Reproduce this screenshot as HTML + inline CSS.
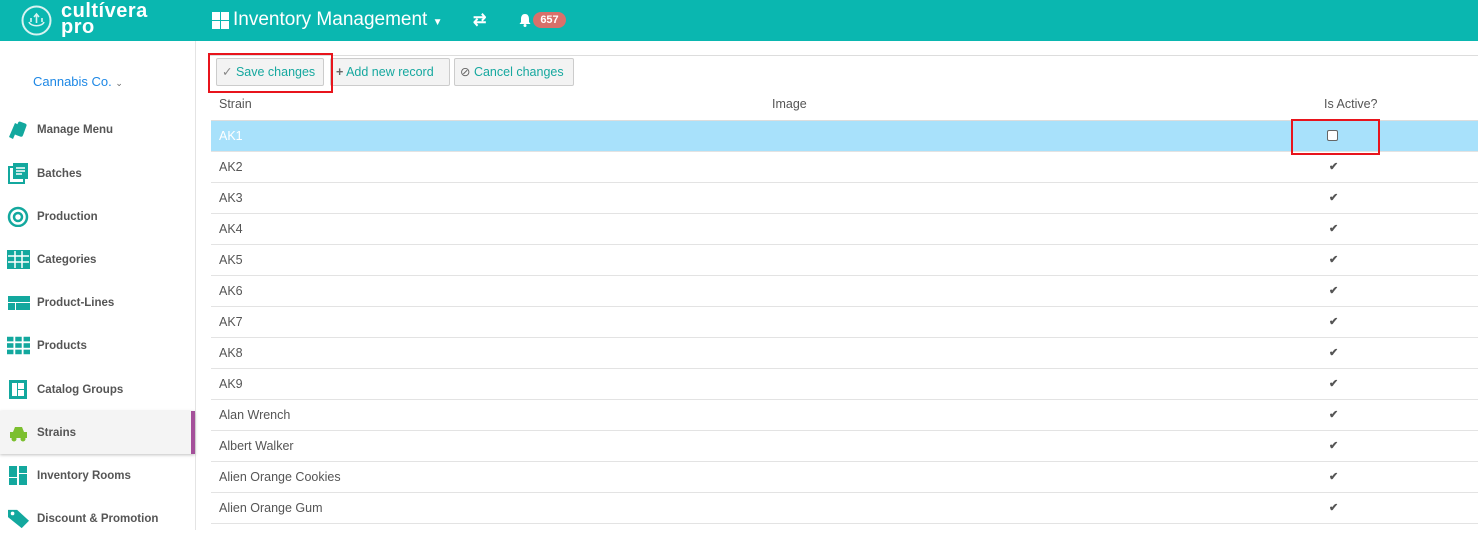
<!DOCTYPE html>
<html><head><meta charset="utf-8"><style>
*{margin:0;padding:0;box-sizing:border-box}
body{width:1478px;height:530px;overflow:hidden;font-family:"Liberation Sans",sans-serif;background:#fff;position:relative;font-size:13px;color:#444}
.top{position:absolute;left:0;top:0;width:1478px;height:41px;background:#0ab7b0;color:#fff}
.side{position:absolute;left:0;top:41px;width:196px;height:489px;background:#fff;border-right:1px solid #e4e4e4}
.item{position:absolute;left:0;width:195px;height:43px;display:flex;align-items:center;font-size:11.5px;font-weight:bold;color:#555}
.item .ic{position:absolute;left:7px;width:23px;height:21px}
.item span{position:absolute;left:37px}
.btn{position:absolute;top:58px;height:28px;border:1px solid #ccc;border-radius:2px;background:#f3f3f3;color:#16a89f;font-size:12.5px;line-height:26px;padding:0 5px;white-space:nowrap}
.row{position:absolute;left:211px;width:1267px;height:31px;border-bottom:1px solid #e3e3e3;font-size:12.5px;color:#555;line-height:30px}
.row span{position:absolute;left:8px}
.row b{position:absolute;left:1118px;top:0;font-size:11px;color:#555}
</style></head><body>
<div class="top">
 <svg style="position:absolute;left:21px;top:5px" width="31" height="31" viewBox="0 0 31 31"><circle cx="15.5" cy="15.5" r="14" fill="none" stroke="#d8f3f1" stroke-width="2"/><path d="M8 17c2 5 13 5 15 0M10 13v4M15.5 9v9M21 13v4M13 12l2.5-3 2.5 3" stroke="#d8f3f1" stroke-width="1.6" fill="none"/></svg>
 <div style="position:absolute;left:61px;top:3px;font-size:20px;font-weight:bold;line-height:16px;letter-spacing:0.5px">cultívera<br>pro</div>
 <div style="position:absolute;left:212px;top:12px;width:17px;height:17px;display:grid;grid-template-columns:8px 8px;gap:1px"><i style="background:#fff"></i><i style="background:#fff"></i><i style="background:#fff"></i><i style="background:#fff"></i></div>
 <div style="position:absolute;left:233px;top:9px;font-size:19px">Inventory Management <span style="font-size:10px">▼</span></div>
 <div style="position:absolute;left:473px;top:10px;font-size:16px;font-weight:bold">⇄</div>
 <svg style="position:absolute;left:519px;top:13px" width="12" height="14" viewBox="0 0 12 14"><path d="M6 1c-3 0-4 2.5-4 5v3L0.5 11h11L10 9V6c0-2.5-1-5-4-5z" fill="#fff"/><circle cx="6" cy="12.5" r="1.5" fill="#fff"/></svg>
 <div style="position:absolute;left:533px;top:12px;width:33px;height:16px;border-radius:8px;background:#d9706a;font-size:11px;font-weight:bold;text-align:center;line-height:16px">657</div>
</div>
<div class="side">
 <div style="position:absolute;left:33px;top:33px;color:#1e88e5;font-size:13px">Cannabis Co. <span style="font-size:9px;color:#666">⌄</span></div>
 <div class="item" style="top:67px"><svg class="ic" viewBox="0 0 23 21"><path d="M2 18l6-14 4 2-6 14z" fill="#13a89e"/><rect x="9" y="3" width="9" height="14" rx="2" transform="rotate(20 13 10)" fill="#13a89e"/></svg><span>Manage Menu</span></div>
 <div class="item" style="top:111px"><svg class="ic" viewBox="0 0 23 21"><rect x="2" y="4" width="15" height="16" fill="none" stroke="#13a89e" stroke-width="2"/><rect x="6" y="0" width="15" height="16" fill="#13a89e"/><path d="M9 5h9M9 8h9M9 11h6" stroke="#fff" stroke-width="1.5"/></svg><span>Batches</span></div>
 <div class="item" style="top:154px"><svg class="ic" viewBox="0 0 23 21"><circle cx="11" cy="11" r="9" fill="none" stroke="#13a89e" stroke-width="2.5"/><circle cx="11" cy="11" r="4" fill="none" stroke="#13a89e" stroke-width="2.5"/></svg><span>Production</span></div>
 <div class="item" style="top:197px"><svg class="ic" viewBox="0 0 23 21"><rect x="0" y="1" width="23" height="19" fill="#13a89e"/><path d="M1 7h21M1 13h21M8 2v17M15 2v17" stroke="#fff" stroke-width="1.5"/></svg><span>Categories</span></div>
 <div class="item" style="top:240px"><svg class="ic" viewBox="0 0 23 21"><rect x="1" y="4" width="22" height="6" fill="#13a89e"/><rect x="1" y="11" width="7" height="7" fill="#13a89e"/><rect x="9" y="11" width="14" height="7" fill="#13a89e"/></svg><span>Product-Lines</span></div>
 <div class="item" style="top:283px"><svg class="ic" viewBox="0 0 25 21"><g fill="#13a89e"><rect x="0" y="1" width="7" height="5"/><rect x="9" y="1" width="7" height="5"/><rect x="18" y="1" width="7" height="5"/><rect x="0" y="8" width="7" height="5"/><rect x="9" y="8" width="7" height="5"/><rect x="18" y="8" width="7" height="5"/><rect x="0" y="15" width="7" height="5"/><rect x="9" y="15" width="7" height="5"/><rect x="18" y="15" width="7" height="5"/></g></svg><span>Products</span></div>
 <div class="item" style="top:327px"><svg class="ic" viewBox="0 0 23 21"><rect x="2" y="1" width="18" height="19" fill="#13a89e"/><rect x="5" y="4" width="5" height="13" fill="#fff"/><rect x="11" y="4" width="6" height="6" fill="#fff"/><rect x="11" y="11" width="6" height="6" fill="#fff"/></svg><span>Catalog Groups</span></div>
 <div class="item" style="top:370px;background:#f4f4f4;box-shadow:0 1px 3px rgba(0,0,0,.25);border-right:4px solid #a4509a"><svg class="ic" viewBox="0 0 23 21"><path d="M3 10h17v6H3z M6 10l2-5h7l2 5" fill="#7cbf2f"/><circle cx="7" cy="17" r="2.5" fill="#7cbf2f"/><circle cx="16" cy="17" r="2.5" fill="#7cbf2f"/></svg><span>Strains</span></div>
 <div class="item" style="top:413px"><svg class="ic" viewBox="0 0 23 21"><g fill="#13a89e"><rect x="2" y="1" width="8" height="11"/><rect x="12" y="1" width="8" height="7"/><rect x="2" y="13" width="8" height="7"/><rect x="12" y="9" width="8" height="11"/></g></svg><span>Inventory Rooms</span></div>
 <div class="item" style="top:456px"><svg class="ic" viewBox="0 0 25 23"><path d="M1 2h10l13 12-8 8L1 10z" fill="#13a89e"/><circle cx="6" cy="6" r="2" fill="#fff"/></svg><span>Discount &amp; Promotion</span></div>
</div>
<div style="position:absolute;left:209px;top:55px;width:1269px;border-top:1px solid #ddd"></div>
<div class="btn" style="left:216px;width:108px"><span style="color:#888">✓</span> Save changes</div>
<div class="btn" style="left:330px;width:120px"><span style="color:#666;font-weight:bold">+</span> Add new record</div>
<div class="btn" style="left:454px;width:120px"><span style="color:#666">⊘</span> Cancel changes</div>
<div style="position:absolute;left:208px;top:53px;width:125px;height:40px;border:2px solid #e8141c"></div>
<div style="position:absolute;left:211px;top:90px;width:1267px;height:31px;border-bottom:1px solid #ddd;font-size:12.5px;color:#555;line-height:28px">
 <span style="position:absolute;left:8px">Strain</span><span style="position:absolute;left:561px">Image</span><span style="position:absolute;left:1113px">Is Active?</span></div>
<div class="row" style="top:121px;background:#a8e1fb;color:#fff"><span>AK1</span><i style="position:absolute;left:1116px;top:9px;width:11px;height:11px;border:1px solid #666;border-radius:2px;background:#fff"></i></div>
<div class="row" style="top:152px"><span>AK2</span><b>✔</b></div>
<div class="row" style="top:183px"><span>AK3</span><b>✔</b></div>
<div class="row" style="top:214px"><span>AK4</span><b>✔</b></div>
<div class="row" style="top:245px"><span>AK5</span><b>✔</b></div>
<div class="row" style="top:276px"><span>AK6</span><b>✔</b></div>
<div class="row" style="top:307px"><span>AK7</span><b>✔</b></div>
<div class="row" style="top:338px"><span>AK8</span><b>✔</b></div>
<div class="row" style="top:369px"><span>AK9</span><b>✔</b></div>
<div class="row" style="top:400px"><span>Alan Wrench</span><b>✔</b></div>
<div class="row" style="top:431px"><span>Albert Walker</span><b>✔</b></div>
<div class="row" style="top:462px"><span>Alien Orange Cookies</span><b>✔</b></div>
<div class="row" style="top:493px"><span>Alien Orange Gum</span><b>✔</b></div>
<div style="position:absolute;left:1291px;top:119px;width:89px;height:36px;border:2px solid #e8141c"></div>
</body></html>
